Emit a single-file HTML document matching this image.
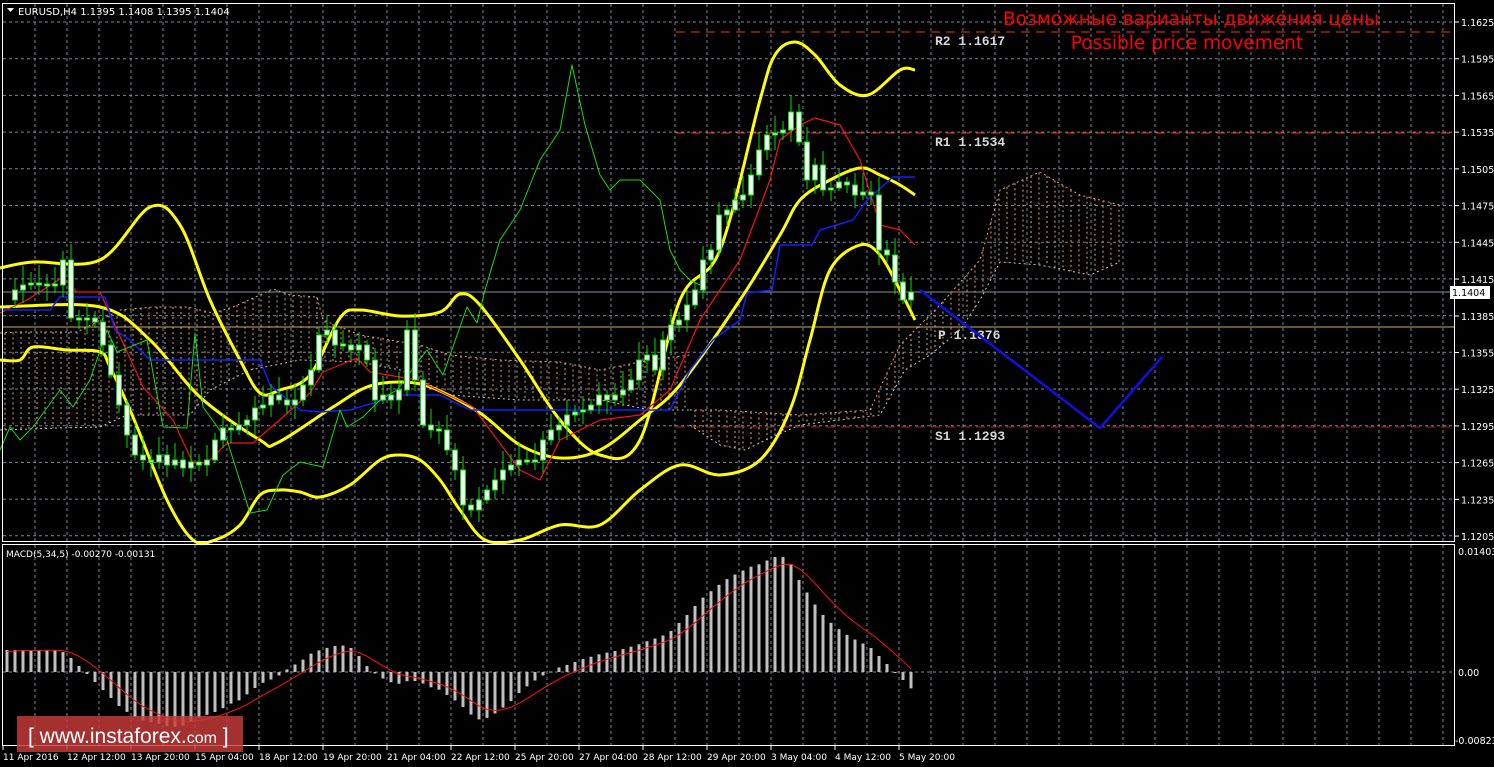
<!DOCTYPE html>
<html><head><meta charset="utf-8"><style>
html,body{margin:0;padding:0;background:#000;width:1494px;height:767px;overflow:hidden}
svg{display:block}
text{font-family:"DejaVu Sans","Liberation Sans",sans-serif}
</style></head><body>
<svg id="s" width="1494" height="767" xmlns="http://www.w3.org/2000/svg">
<rect width="1494" height="767" fill="#000"/>
<g id="grid" stroke="#7a8290" stroke-width="1" stroke-dasharray="3,3"></g>
<g id="cloud" stroke="#e8a070" stroke-width="1" stroke-dasharray="2,3" fill="none"></g>
<g id="lv"></g>
<g id="lines" fill="none"></g>
<g id="candles"></g>
<g id="macd"></g>
<rect x="2.5" y="3.5" width="1452" height="538" fill="none" stroke="#fff"/>
<rect x="2.5" y="544.5" width="1452" height="201" fill="none" stroke="#fff"/>
<g id="axis" font-size="9.5" fill="#fff"></g>
<g font-size="10" fill="#fff">
<path d="M7 8 L14 8 L10.5 12 Z" fill="#fff"/>
<text x="18" y="15">EURUSD,H4  1.1395 1.1408 1.1395 1.1404</text>
<text x="6" y="557" font-size="9">MACD(5,34,5) -0.00270 -0.00131</text>
</g>
<text x="1191" y="25" font-size="18.5" fill="#f00" text-anchor="middle">Возможные варианты движения цены</text>
<text x="1187" y="49" font-size="18.5" fill="#f00" text-anchor="middle">Possible price movement</text>
<g font-size="13" font-weight="bold" fill="#d8d8d8">
<text x="935" y="45" style="font-family:'Liberation Mono',monospace">R2 1.1617</text>
<text x="935" y="146" style="font-family:'Liberation Mono',monospace">R1 1.1534</text>
<text x="938" y="339" style="font-family:'Liberation Mono',monospace">P 1.1376</text>
<text x="935" y="440" style="font-family:'Liberation Mono',monospace">S1 1.1293</text>
</g>
<polyline points="920,290 1100,428 1162,357" fill="none" stroke="#1010e0" stroke-width="2.5"/>
<rect x="1450" y="286" width="40" height="13" fill="#fff"/>
<text x="1452" y="296" font-size="9.5" fill="#000">1.1404</text>
<rect x="17" y="716" width="226" height="36" fill="#c83a3a" opacity="0.82"/>
<text x="28" y="743" font-size="21" fill="#fff" style="font-family:'Liberation Sans',sans-serif">[ <tspan>www.instaforex.</tspan><tspan font-size="16">com</tspan> ]</text>
</svg>
<script>
var NS="http://www.w3.org/2000/svg";
function el(p,t,a){var e=document.createElementNS(NS,t);for(var k in a)e.setAttribute(k,a[k]);document.getElementById(p).appendChild(e);return e;}
for(var i=0;i<15;i++){var y=22+i*36.7;el('grid','line',{x1:3,x2:1454,y1:y,y2:y});}
el('grid','line',{x1:3,x2:1454,y1:672,y2:672});
for(var x=35;x<1454;x+=32){el('grid','line',{x1:x,x2:x,y1:4,y2:541});el('grid','line',{x1:x,x2:x,y1:545,y2:745});}
var pr=["1.1625","1.1595","1.1565","1.1535","1.1505","1.1475","1.1445","1.1415","1.1385","1.1355","1.1325","1.1295","1.1265","1.1235","1.1205"];
for(var i=0;i<pr.length;i++){var y=22+i*36.72;if(i==8)y=316;el('axis','line',{x1:1455,x2:1459,y1:y,y2:y,stroke:'#fff'});var t=el('axis','text',{x:1461,y:y+4});t.textContent=pr[i];}
[["0.01403",555],["0.00",676],["-0.00823",744]].forEach(function(a){var t=el('axis','text',{x:a[0][0]=='-'?1455:1458,y:a[1]});t.textContent=a[0];});
var tl=["11 Apr 2016","12 Apr 12:00","13 Apr 20:00","15 Apr 04:00","18 Apr 12:00","19 Apr 20:00","21 Apr 04:00","22 Apr 12:00","25 Apr 20:00","27 Apr 04:00","28 Apr 12:00","29 Apr 20:00","3 May 04:00","4 May 12:00","5 May 20:00"];
for(var i=0;i<tl.length;i++){var x=3+i*64;var t=el('axis','text',{x:x,y:760,'font-size':'9'});t.textContent=tl[i];el('axis','line',{x1:x,x2:x,y1:746,y2:750,stroke:'#fff'});}
el('lv','line',{x1:676,x2:1454,y1:32,y2:32,stroke:'#ff3010','stroke-dasharray':'9,6'});
el('lv','line',{x1:676,x2:1454,y1:133,y2:133,stroke:'#ff3010','stroke-dasharray':'9,6'});
el('lv','line',{x1:3,x2:1454,y1:327,y2:327,stroke:'#c8b060'});
el('lv','line',{x1:676,x2:1454,y1:427,y2:427,stroke:'#ff3010','stroke-dasharray':'9,6','opacity':'0.7'});
el('lv','line',{x1:3,x2:1454,y1:292,y2:292,stroke:'#8090a0'});
function pts(a){return a.map(function(p){return p.join(',')}).join(' ');}
function smooth(a){var d='M'+a[0][0]+','+a[0][1];for(var i=0;i<a.length-1;i++){var p0=a[i-1]||a[i],p1=a[i],p2=a[i+1],p3=a[i+2]||p2;
 d+=' C'+(p1[0]+(p2[0]-p0[0])/6)+','+(p1[1]+(p2[1]-p0[1])/6)+' '+(p2[0]-(p3[0]-p1[0])/6)+','+(p2[1]-(p3[1]-p1[1])/6)+' '+p2[0]+','+p2[1];}return d;}
function interp(a,x){for(var i=0;i<a.length-1;i++){if(x>=a[i][0]&&x<=a[i+1][0]){var f=(x-a[i][0])/(a[i+1][0]-a[i][0]);return a[i][1]+f*(a[i+1][1]-a[i][1]);}}return null;}
var clouds=[
 [[[0,333],[20,332],[77,332],[120,310],[153,307],[187,307],[213,313],[233,307],[260,295],[273,289],[290,295],[317,297],[323,320],[360,335],[420,345],[450,355],[500,360],[560,362],[600,370],[650,360],[690,355]],
  [[0,430],[60,428],[100,427],[127,415],[190,415],[210,390],[250,370],[300,360],[360,362],[400,370],[450,395],[520,400],[600,400],[650,410],[690,410]]],
 [[[690,410],[720,410],[800,415],[870,410],[900,345],[940,305],[980,260],[1000,190],[1040,172],[1080,195],[1120,205]],
  [[690,425],[720,445],[745,450],[770,438],[800,425],[880,415],[905,370],[930,355],[960,330],[980,300],[1000,262],[1040,265],[1090,275],[1120,262]]]];
clouds.forEach(function(c){el('cloud','polyline',{points:pts(c[0])});el('cloud','polyline',{points:pts(c[1]),stroke:'#d0c0c0'});
 for(var x=c[0][0][0]+5;x<c[0][c[0].length-1][0];x+=8){var a=interp(c[0],x),b=interp(c[1],x);if(a!=null&&b!=null)el('cloud','line',{x1:x,x2:x,y1:a,y2:b});}});
var L=[
 ['#ffff00',3,[[0,268],[33,262],[100,260],[150,207],[180,225],[210,300],[240,360],[260,393],[280,390],[310,375],[340,318],[360,310],[400,316],[440,312],[460,294],[480,305],[520,360],[560,420],[600,455],[640,440],[680,300],[720,250],[760,100],[775,55],[795,42],[815,55],[840,85],[868,95],[900,70],[915,70]]],
 ['#ffff00',3,[[0,307],[100,307],[150,340],[200,397],[260,440],[277,443],[333,407],[367,387],[400,382],[433,388],[480,413],[520,445],[560,458],[600,450],[640,420],[680,385],[740,300],[780,235],[800,200],[830,180],[860,168],[880,175],[900,185],[915,195]]],
 ['#ffff00',3,[[0,360],[20,360],[33,347],[67,350],[100,352],[110,367],[133,417],[167,500],[193,540],[215,540],[240,525],[260,495],[280,490],[300,492],[320,497],[350,485],[380,460],[400,455],[420,460],[440,480],[460,510],[485,540],[520,540],[560,525],[600,525],[640,490],[680,465],[720,475],[760,460],[790,410],[810,340],[830,270],[860,245],[880,255],[900,290],[915,320]]],
 ['#ff1010',1.2,[[0,313],[27,300],[63,277],[77,292],[100,292],[123,343],[143,387],[173,420],[193,463],[207,463],[227,443],[253,443],[283,417],[310,393],[323,372],[357,358],[370,372],[400,377],[417,380],[473,407],[490,430],[520,470],[540,480],[560,440],[600,420],[640,415],[670,390],[700,320],[740,260],[770,180],[780,140],[800,125],[815,118],[840,125],[860,160],[880,225],[900,230],[915,245]]],
 ['#1020ff',1.5,[[0,310],[50,310],[60,297],[105,297],[115,330],[130,340],[150,360],[260,360],[270,385],[300,410],[320,412],[350,410],[400,395],[440,395],[470,410],[620,410],[670,410],[690,370],[713,340],[740,320],[747,293],[772,290],[780,245],[812,245],[820,230],[853,220],[867,200],[893,177],[915,177]]],
 ['#10e010',1,[[0,450],[10,427],[20,440],[33,427],[60,390],[73,407],[90,380],[107,330],[117,352],[147,340],[163,427],[187,428],[195,333],[203,407],[227,440],[250,513],[267,510],[283,475],[300,462],[323,467],[340,410],[347,427],[363,417],[380,400],[397,390],[427,350],[443,375],[467,307],[477,323],[485,290],[500,240],[520,210],[540,160],[560,130],[572,65],[585,125],[600,175],[610,190],[620,180],[640,180],[660,200],[670,250],[680,270],[690,280],[700,285],[705,293]]]
];
L.forEach(function(l){if(l[0]=='#ffff00')el('lines','path',{d:smooth(l[2]),stroke:l[0],'stroke-width':l[1]});else el('lines','polyline',{points:pts(l[2]),stroke:l[0],'stroke-width':l[1],'stroke-linejoin':'round'});});
var c=[300,290,285,283,285,285,285,260,318,320,318,322,345,375,405,435,455,460,462,455,465,460,468,462,465,460,440,428,430,425,420,408,405,395,400,405,400,385,370,335,330,345,345,350,345,360,400,395,400,390,330,380,425,430,430,450,470,505,510,500,490,480,470,465,460,462,460,440,430,425,415,412,410,405,395,400,395,390,380,360,355,370,340,325,320,305,290,260,250,215,210,200,195,175,150,135,133,130,112,142,180,165,190,188,182,185,195,192,195,250,255,282,300,292];
for(var i=1;i<c.length;i++){var x=7+i*8,o=c[i-1],cl=c[i],t=Math.min(o,cl),b=Math.max(o,cl);if(b-t<2){t-=1;b+=1;}
 var w=5+((i*7)%15);el('candles','line',{x1:x,x2:x,y1:t-w,y2:b+((i*5)%13)+3,stroke:'#00e000'});
 el('candles','rect',{x:x-2.5,y:t,width:5,height:b-t,fill:'#fff',stroke:'#00e000'});}
var mp=[[7,-22],[60,-22],[70,-15],[80,-5],[90,5],[100,15],[110,25],[120,35],[130,42],[140,48],[150,50],[160,52],[170,55],[180,55],[190,50],[200,45],[210,42],[220,38],[230,32],[240,28],[250,20],[260,12],[270,8],[280,3],[290,-5],[300,-10],[310,-18],[320,-22],[330,-25],[340,-27],[350,-25],[360,-15],[370,-2],[380,5],[390,10],[400,12],[410,8],[420,10],[430,15],[440,18],[450,25],[460,32],[470,42],[480,48],[490,45],[500,38],[510,30],[520,20],[530,12],[540,5],[550,0],[560,-5],[570,-8],[580,-12],[590,-15],[600,-18],[610,-20],[620,-22],[630,-25],[640,-28],[650,-32],[660,-35],[670,-40],[680,-50],[690,-60],[700,-72],[710,-80],[720,-88],[730,-95],[740,-100],[750,-105],[760,-108],[770,-113],[780,-117],[790,-110],[800,-90],[810,-75],[820,-60],[830,-50],[840,-42],[850,-35],[860,-30],[870,-25],[880,-15],[890,-5],[900,5],[910,15],[915,22]];
for(var i=0;i<c.length;i++){var x=7+i*8,v=interp(mp,x);if(v==null)continue;el('macd','rect',{x:x-1.5,y:Math.min(672,672+v),width:3,height:Math.max(1,Math.abs(v)),fill:'#c0c0c0'});}
var sig=[],prev=-20;for(var x=7;x<=915;x+=8){var v=interp(mp,x);if(v==null)continue;prev=prev+(v-prev)*0.28;sig.push([x,672+prev]);}
el('macd','polyline',{points:pts(sig),fill:'none',stroke:'#ff1010','stroke-width':1});
</script>
</body></html>
